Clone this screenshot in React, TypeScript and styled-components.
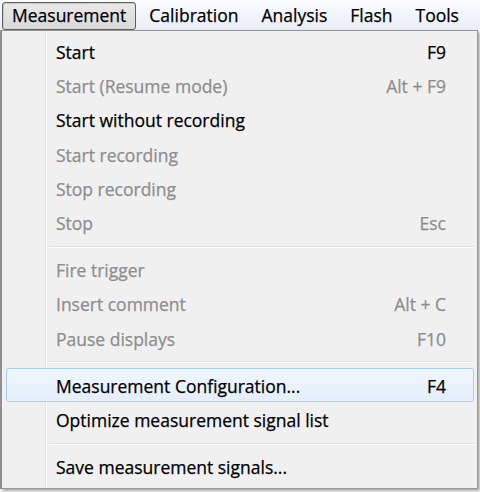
import React from 'react';
import styled, { createGlobalStyle } from 'styled-components';

type Entry =
  | { kind: 'item'; label: string; shortcut?: string; disabled?: boolean; hot?: boolean }
  | { kind: 'sep' };

const menuTitles = ['Measurement', 'Calibration', 'Analysis', 'Flash', 'Tools'];

const entries: Entry[] = [
  { kind: 'item', label: 'Start', shortcut: 'F9' },
  { kind: 'item', label: 'Start (Resume mode)', shortcut: 'Alt + F9', disabled: true },
  { kind: 'item', label: 'Start without recording' },
  { kind: 'item', label: 'Start recording', disabled: true },
  { kind: 'item', label: 'Stop recording', disabled: true },
  { kind: 'item', label: 'Stop', shortcut: 'Esc', disabled: true },
  { kind: 'sep' },
  { kind: 'item', label: 'Fire trigger', disabled: true },
  { kind: 'item', label: 'Insert comment', shortcut: 'Alt + C', disabled: true },
  { kind: 'item', label: 'Pause displays', shortcut: 'F10', disabled: true },
  { kind: 'sep' },
  { kind: 'item', label: 'Measurement Configuration...', shortcut: 'F4', hot: true },
  { kind: 'item', label: 'Optimize measurement signal list' },
  { kind: 'sep' },
  { kind: 'item', label: 'Save measurement signals...' },
];

const App = () => {
  return (
    <>
      <GlobalStyle />
      <Page>
        <MenuBar>
          {menuTitles.map((t, i) => (
            <BarItem key={t} $open={i === 0}>
              {t}
            </BarItem>
          ))}
        </MenuBar>
        <Dropdown>
          {entries.map((e, i) =>
            e.kind === 'sep' ? (
              <Separator key={i} />
            ) : (
              <Item key={i} $disabled={e.disabled} $hot={e.hot}>
                <Label>{e.label}</Label>
                {e.shortcut && <Shortcut>{e.shortcut}</Shortcut>}
              </Item>
            )
          )}
        </Dropdown>
      </Page>
    </>
  );
};

const GlobalStyle = createGlobalStyle`
  body {
    margin: 0;
    background: #ffffff;
    font-family: 'Open Sans', 'Noto Sans', sans-serif;
  }
`;

const Page = styled.div`
  width: 480px;
  height: 492px;
  overflow: hidden;
  display: flex;
  flex-direction: column;
`;

const MenuBar = styled.div`
  height: 30px;
  display: flex;
  align-items: flex-end;
  gap: 3px;
  padding-left: 2px;
  background: linear-gradient(#fbfcfe, #e8eef7);
  box-sizing: border-box;
`;

const BarItem = styled.div<{ $open?: boolean }>`
  height: 28px;
  box-sizing: border-box;
  display: flex;
  align-items: center;
  padding: 0 9px 3px;
  font-size: 17.5px;
  color: #000;
  -webkit-text-stroke: 0.25px currentColor;
  border: 1px solid ${(p) => (p.$open ? '#5f5f5f' : 'transparent')};
  border-radius: 3px;
  background: ${(p) => (p.$open ? 'linear-gradient(#e9e9e9, #d9d9d9)' : 'transparent')};
  box-shadow: ${(p) => (p.$open ? 'inset 1px 1px 0 #c8c8c8' : 'none')};
`;

const Dropdown = styled.div`
  width: 478px;
  box-sizing: border-box;
  display: flex;
  flex-direction: column;
  padding: 3px 3px 4px 4px;
  border: 1px solid #979797;
  border-left: 2px solid #8f8f8f;
  background:
    linear-gradient(
      to right,
      transparent 43px,
      #e2e3e3 43px,
      #e2e3e3 44px,
      #ffffff 44px,
      #ffffff 45px,
      transparent 45px
    ),
    #f0f0f0;
  box-shadow: 2px 2px 3px rgba(0, 0, 0, 0.35);
`;

const Item = styled.div<{ $disabled?: boolean; $hot?: boolean }>`
  height: 34.3px;
  box-sizing: border-box;
  display: flex;
  align-items: center;
  padding: 1px 27px 0 49px;
  font-size: 17.5px;
  color: ${(p) => (p.$disabled ? '#8d8d8d' : '#000')};
  -webkit-text-stroke: 0.25px currentColor;
  border: 1px solid ${(p) => (p.$hot ? '#aacdf3' : 'transparent')};
  border-radius: 3px;
  background: ${(p) => (p.$hot ? 'linear-gradient(#f1f6fd, #e3eefb)' : 'transparent')};
`;

const Label = styled.span`
  flex: 1;
  white-space: nowrap;
`;

const Shortcut = styled.span`
  white-space: nowrap;
`;

const Separator = styled.div`
  height: 12.7px;
  box-sizing: border-box;
  margin-left: 43px;
  padding-top: 6px;
  &::before {
    content: '';
    display: block;
    height: 1px;
    background: #e0e0e0;
    border-bottom: 1px solid #ffffff;
  }
`;

export default App;
